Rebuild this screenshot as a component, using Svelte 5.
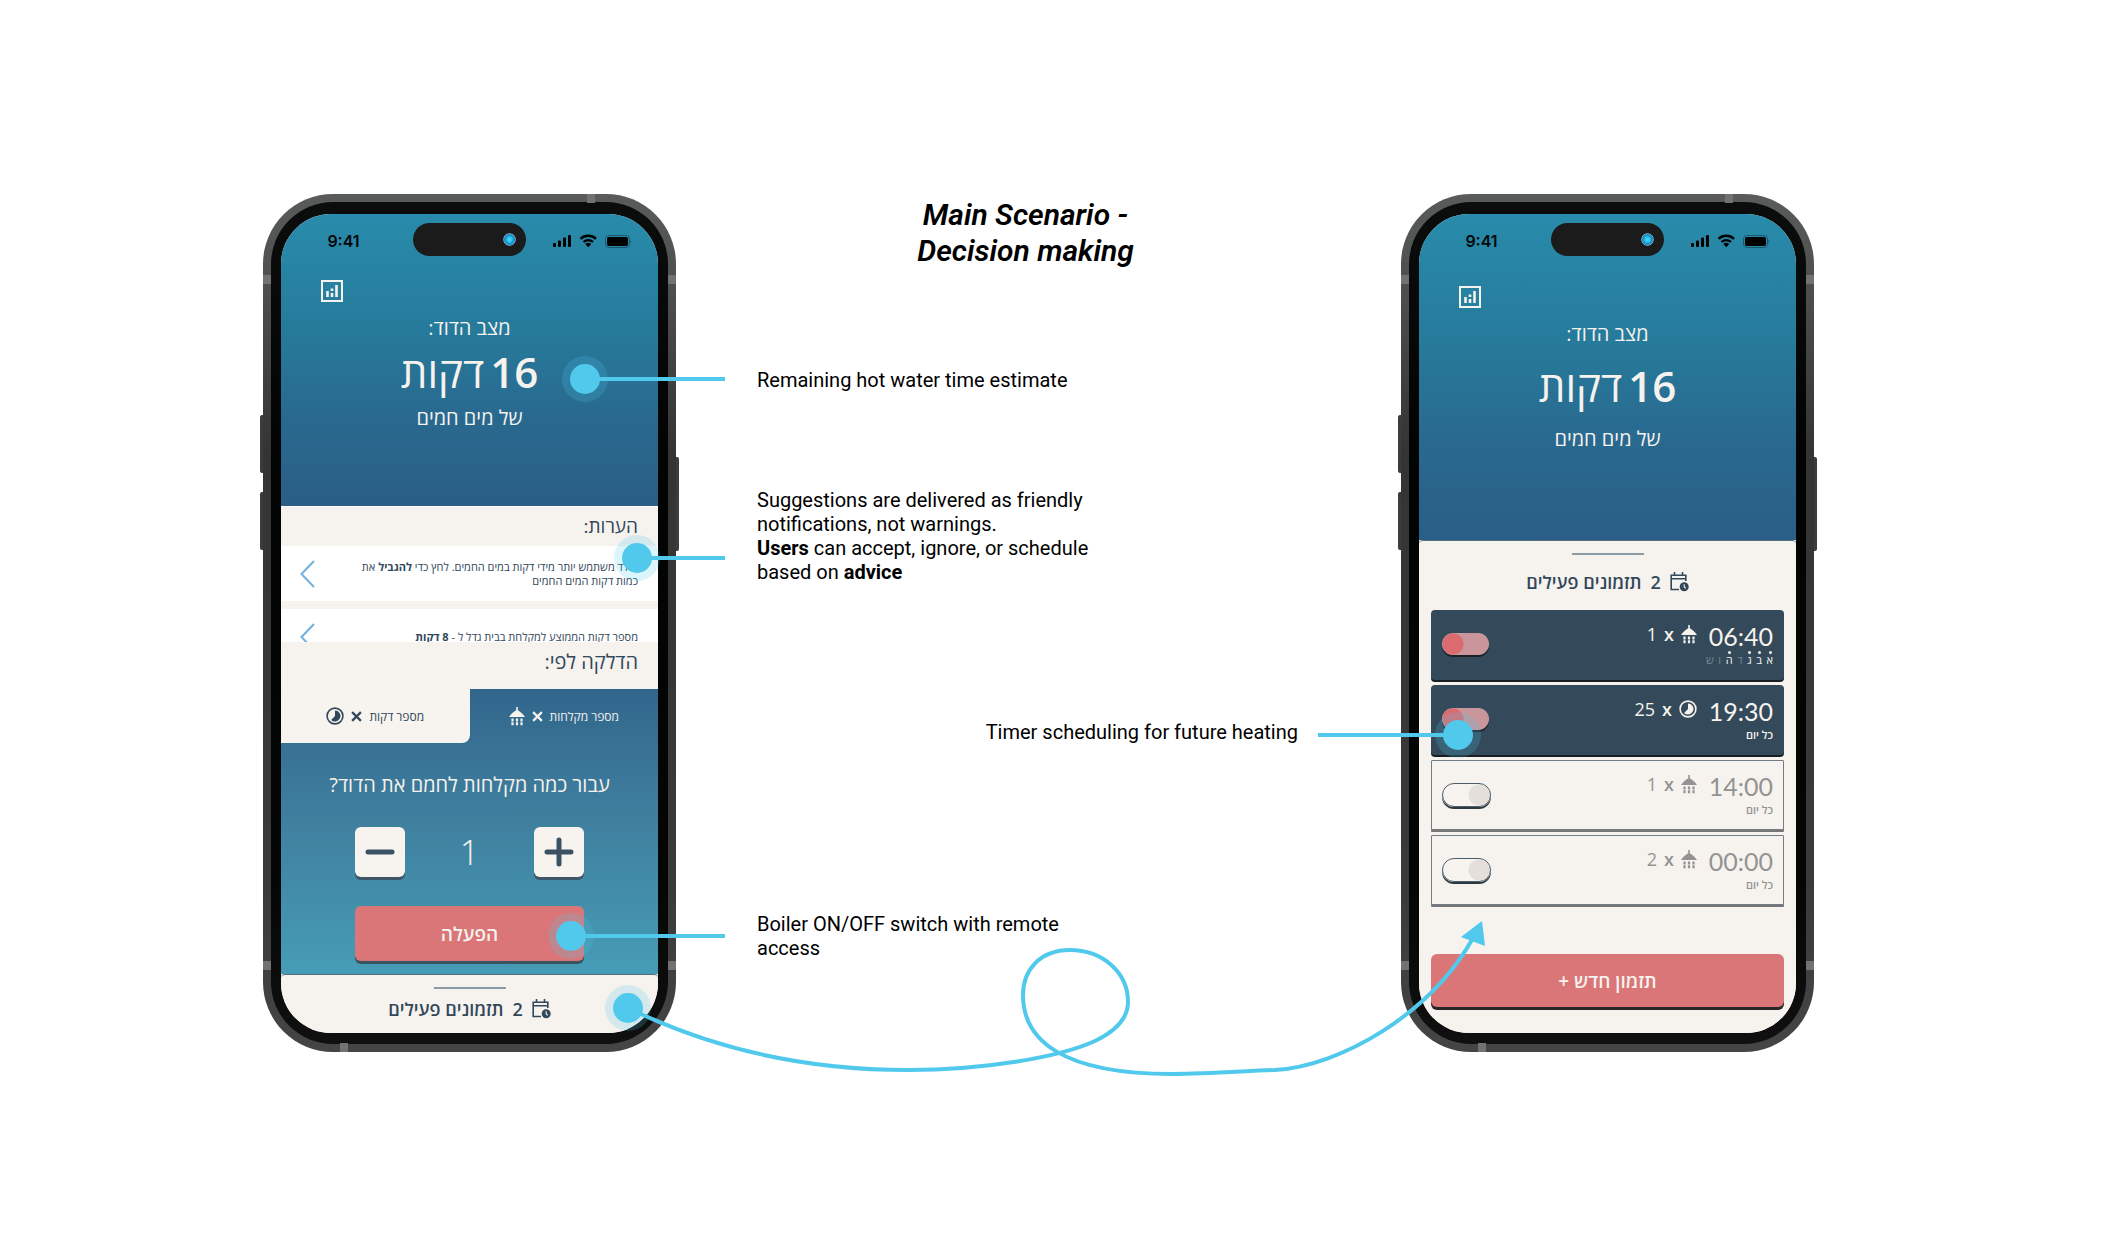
<script>
  let showers = $state(1);
  let mode = $state('showers');

  const week = [
    { letter: 'א', on: true },
    { letter: 'ב', on: true },
    { letter: 'ג', on: true },
    { letter: 'ד', on: false },
    { letter: 'ה', on: true },
    { letter: 'ו', on: false },
    { letter: 'ש', on: false }
  ];

  let timers = $state([
    { time: '06:40', kind: 'shower', amount: 1, days: true, on: true },
    { time: '19:30', kind: 'minutes', amount: 25, days: false, on: true },
    { time: '14:00', kind: 'shower', amount: 1, days: false, on: false },
    { time: '00:00', kind: 'shower', amount: 2, days: false, on: false }
  ]);
</script>

{#snippet showerIcon()}
  <svg class="shower" viewBox="0 0 16 19" aria-hidden="true">
    <path d="M7.200 0h1.600v3.200c2.600 1.400 5 3.600 7.200 6.800H0c2.200-3.200 4.600-5.400 7.200-6.800z" fill="currentColor" />
    <path d="M3.500 11.500v7M8 11.500v7M12.500 11.500v7" stroke="currentColor" stroke-width="2.200" stroke-dasharray="2.900 0.900" fill="none" />
  </svg>
{/snippet}

{#snippet minutesIcon()}
  <svg class="minutes" viewBox="0 0 18 18" aria-hidden="true">
    <circle cx="9" cy="9" r="7.900" fill="none" stroke="currentColor" stroke-width="1.600" />
    <path d="M9 3.500a5.500 5.500 0 1 1-3.900 9.400L9 9z" fill="currentColor" />
  </svg>
{/snippet}

{#snippet calendarIcon()}
  <svg class="calendar" viewBox="0 0 19 20" aria-hidden="true">
    <path d="M9 17.500H1.200V3.200h14.600V9M1.200 6.800h14.600M4.500 0v3.500M12.500 0v3.500" fill="none" stroke="currentColor" stroke-width="1.600" />
    <circle cx="14.200" cy="14.800" r="4.500" fill="currentColor" />
    <path d="M14.200 12.200v2.800l1.600 1.300" fill="none" stroke="#f6f2ee" stroke-width="1.100" />
  </svg>
{/snippet}

{#snippet chevron()}
  <svg class="chevron" viewBox="0 0 15 28" aria-hidden="true">
    <path d="M14 1L1.500 14 14 27" fill="none" stroke="currentColor" stroke-width="2" />
  </svg>
{/snippet}

{#snippet frameParts()}
  <i class="key key-up"></i>
  <i class="key key-down"></i>
  <i class="key key-power"></i>
  <i class="band band-top"></i>
  <i class="band band-left-high"></i>
  <i class="band band-right-high"></i>
  <i class="band band-left-low"></i>
  <i class="band band-right-low"></i>
  <i class="band band-bottom"></i>
{/snippet}

{#snippet hero()}
  <div class="status" dir="ltr">
    <span class="clock">9:41</span>
    <span class="island"><i class="camera"></i></span>
    <svg class="radios" viewBox="0 0 80 14" aria-hidden="true">
      <rect x="1" y="9" width="3" height="4" rx="1" />
      <rect x="6" y="6.500" width="3" height="6.500" rx="1" />
      <rect x="11" y="3.500" width="3" height="9.500" rx="1" />
      <rect x="16" y="1" width="3" height="12" rx="1" />
      <path d="M28.500 4.800a11.500 11.500 0 0 1 15.500 0" fill="none" stroke="#000" stroke-width="2.400" />
      <path d="M31.500 8a7 7 0 0 1 9.500 0" fill="none" stroke="#000" stroke-width="2.300" />
      <path d="M36.250 13.200l-3-3.100a4.400 4.400 0 0 1 6 0z" />
      <rect x="53.500" y="1.500" width="24" height="12" rx="3.500" fill="none" stroke="#000" stroke-opacity=".35" />
      <rect x="55" y="3" width="21" height="9" rx="2" />
      <path d="M78.500 6v3c1-.3 1-2.700 0-3z" fill-opacity=".4" />
    </svg>
  </div>
  <button class="stats" aria-label="סטטיסטיקה">
    <svg viewBox="0 0 22 22" aria-hidden="true">
      <rect x="1" y="1" width="20" height="20" fill="none" stroke="currentColor" stroke-width="2" />
      <path d="M6.500 11v6M11 8.500v2.500M11 13v4M15.500 5v12" stroke="currentColor" stroke-width="2.600" fill="none" />
    </svg>
  </button>
  <p class="caption">מצב הדוד:</p>
  <p class="reading"><b>16</b><span>דקות</span></p>
  <p class="caption">של מים חמים</p>
{/snippet}

<main>
  <div class="board">
    <section class="phone">
      {@render frameParts()}
      <div class="bezel">
        <div class="screen home" dir="rtl" lang="he">
          <header class="hero">{@render hero()}</header>

          <h2 class="notes-title">הערות:</h2>
          <div class="advice-list">
            <button class="advice">
              <span>הילד משתמש יותר מידי דקות במים החמים. לחץ כדי <b>להגביל</b> את<br />כמות דקות המים החמים</span>
              {@render chevron()}
            </button>
            <button class="advice">
              <span>מספר דקות הממוצע למקלחת בבית גדל ל - <b>8 דקות</b></span>
              {@render chevron()}
            </button>
          </div>
          <h2 class="mode-title">הדלקה לפי:</h2>

          <div class="heater">
            <div class="tabs">
              <button class:idle={mode !== 'showers'} onclick={() => (mode = 'showers')}>
                <span>מספר מקלחות</span>
                <svg class="times" viewBox="0 0 10 10" aria-hidden="true"><path d="M1 1l8 8M9 1L1 9" /></svg>
                {@render showerIcon()}
              </button>
              <button class:idle={mode !== 'minutes'} onclick={() => (mode = 'minutes')}>
                <span>מספר דקות</span>
                <svg class="times" viewBox="0 0 10 10" aria-hidden="true"><path d="M1 1l8 8M9 1L1 9" /></svg>
                {@render minutesIcon()}
              </button>
            </div>
            <p class="question">עבור כמה מקלחות לחמם את הדוד?</p>
            <div class="stepper">
              <button aria-label="הוסף" onclick={() => (showers += 1)}>
                <svg viewBox="0 0 30 30" aria-hidden="true"><path d="M15 3v24M3 15h24" /></svg>
              </button>
              <output>{showers}</output>
              <button aria-label="הפחת" onclick={() => (showers = Math.max(1, showers - 1))}>
                <svg viewBox="0 0 30 30" aria-hidden="true"><path d="M3 15h24" /></svg>
              </button>
            </div>
            <button class="primary activate">הפעלה</button>
          </div>

          <footer class="sheet">
            <i class="handle"></i>
            <h2 class="sheet-title">{@render calendarIcon()}<span>2</span><span>תזמונים פעילים</span></h2>
          </footer>
        </div>
      </div>
      <i class="spot reach-right spot-time"></i>
      <i class="spot reach-right spot-advice"></i>
      <i class="spot reach-right spot-activate"></i>
      <i class="spot spot-sheet"></i>
    </section>

    <section class="story">
      <h1>Main Scenario -<br />Decision making</h1>
      <p class="note note-time">Remaining hot water time estimate</p>
      <p class="note note-advice">
        Suggestions are delivered as friendly notifications, not warnings.<br />
        <b>Users</b> can accept, ignore, or schedule<br />
        based on <b>advice</b>
      </p>
      <p class="note note-timer">Timer scheduling for future heating</p>
      <p class="note note-switch">Boiler ON/OFF switch with remote access</p>
    </section>

    <section class="phone">
      {@render frameParts()}
      <div class="bezel">
        <div class="screen schedule" dir="rtl" lang="he">
          <header class="hero tall">{@render hero()}</header>
          <div class="sheet open">
            <i class="handle"></i>
            <h2 class="sheet-title">{@render calendarIcon()}<span>2</span><span>תזמונים פעילים</span></h2>
            <ul class="timers">
              {#each timers as timer}
                <li class="timer" class:off={!timer.on}>
                  <div class="when">
                    <time dir="ltr">{timer.time}</time>
                    {#if timer.days}
                      <span class="days">
                        {#each week as day}
                          <span class:skip={!day.on}>{day.letter}</span>
                        {/each}
                      </span>
                    {:else}
                      <span class="daily">כל יום</span>
                    {/if}
                  </div>
                  <div class="dose">
                    {#if timer.kind === 'shower'}{@render showerIcon()}{:else}{@render minutesIcon()}{/if}
                    <span class="by">x</span>
                    <span>{timer.amount}</span>
                  </div>
                  <input type="checkbox" role="switch" aria-label={timer.time} bind:checked={timer.on} />
                </li>
              {/each}
            </ul>
            <button class="primary create">תזמון חדש +</button>
          </div>
        </div>
      </div>
      <i class="spot reach-left spot-switch"></i>
    </section>

    <svg class="journey" viewBox="263 194 1551 858" preserveAspectRatio="none" aria-hidden="true">
      <path
        d="M641 1014C730 1055 820 1070 908 1070C985 1070 1060 1057 1095 1041C1118 1030 1128 1016 1128 1002C1128 972 1102 950 1070 950C1040 950 1023 970 1023 995C1023 1040 1062 1074 1172 1074C1210 1074 1245 1071 1275 1070C1340 1066 1430 1015 1473 938"
        fill="none" stroke="#50c9ec" stroke-width="4" />
      <path d="M1482 921L1461 937L1485 946z" fill="#50c9ec" />
    </svg>
  </div>
</main>

<style>
  :global(body) {
    margin: 0;
    background: #fff;
  }

  main {
    padding: 194px 28px 182px 0;
    font-family: Roboto, 'Liberation Sans', sans-serif;
    color: #000;
  }

  .board {
    position: relative;
    display: grid;
    grid-template-columns: 413px minmax(400px, 725px) 413px;
    justify-content: center;
    align-items: start;
    width: fit-content;
    margin: 0 auto;
  }

  h1, h2, p, ul {
    margin: 0;
    padding: 0;
  }

  button {
    border: 0;
    padding: 0;
    background: none;
    color: inherit;
    font: inherit;
    cursor: pointer;
  }

  .journey {
    position: absolute;
    inset: 0;
    width: 100%;
    height: 100%;
    overflow: visible;
    pointer-events: none;
  }

  /* Device frame */
  .phone {
    position: relative;
    box-sizing: border-box;
    padding: 8px;
    border-radius: 70px;
    background: linear-gradient(#5a5c5c, #4c4d4d 12%, #343434 30%, #3a3a3a 80%, #454545);
  }

  .bezel {
    padding: 12px 10px 11px;
    border-radius: 62px;
    background: linear-gradient(#0b0c0c, #020404 30%, #040505 80%, #101010);
  }

  .screen {
    display: flex;
    flex-direction: column;
    overflow: hidden;
    border-radius: 50px;
    background: #f6f2ee;
    color: #31475a;
    font-family: 'Open Sans', 'Liberation Sans', sans-serif;
  }

  .key {
    position: absolute;
    width: 3px;
    height: 58px;
    background: #3b3c3c;
  }

  .key-up {
    top: 221px;
    left: -3px;
    border-radius: 2px 0 0 2px;
  }

  .key-down {
    top: 298px;
    left: -3px;
    border-radius: 2px 0 0 2px;
  }

  .key-power {
    top: 263px;
    right: -3px;
    height: 94px;
    border-radius: 0 2px 2px 0;
  }

  .band {
    position: absolute;
    width: 8px;
    height: 9px;
    background: #727272;
  }

  .band-top { top: 0; left: 324px; }
  .band-left-high { top: 81px; left: 0; }
  .band-right-high { top: 81px; right: 0; }
  .band-left-low { bottom: 82px; left: 0; }
  .band-right-low { bottom: 82px; right: 0; }
  .band-bottom { bottom: 0; left: 77px; }

  /* Hero */
  .hero {
    box-sizing: border-box;
    display: flex;
    flex-direction: column;
    height: 292px;
    background: linear-gradient(#298bab, #267c9c 36%, #29698f 70%, #2a5e86);
    color: #f6f2ee;
    text-align: center;
  }

  .hero.tall {
    height: 326px;
  }

  .status {
    display: grid;
    grid-template-columns: 1fr 113px 1fr;
    align-items: center;
    padding-top: 9px;
    color: #04080a;
  }

  .clock {
    padding-top: 3px;
    padding-right: 7px;
    font: 600 16px/30px Inter, sans-serif;
  }

  .island {
    display: flex;
    align-items: center;
    justify-content: flex-end;
    height: 33px;
    padding-right: 10px;
    border-radius: 17px;
    background: #1b1b1b;
  }

  .camera {
    width: 11px;
    height: 11px;
    border: 1px solid #8fb3c4;
    outline: 1px solid #141c22;
    border-radius: 50%;
    background: radial-gradient(#3fd0f0 20%, #159cd8 50%, #1d5a88);
  }

  .radios {
    width: 80px;
    height: 14px;
    margin-top: 3px;
    margin-left: 26px;
  }

  .stats {
    align-self: flex-end;
    width: 22px;
    height: 22px;
    margin: 24px 0 0 40px;
  }

  .stats svg {
    display: block;
  }

  .caption {
    font-size: 20px;
    line-height: 26px;
  }

  .stats + .caption {
    margin-top: 13px;
  }

  .reading {
    display: flex;
    justify-content: center;
    gap: 6px;
    margin: 6px 0 8px;
    font-size: 42px;
    line-height: 50px;
  }

  .reading b {
    font-weight: 600;
  }

  .tall .stats {
    margin-top: 30px;
  }

  .tall .reading {
    margin: 14px 0 15px;
  }

  /* Advice */
  h2 {
    font-size: 19px;
    font-weight: 500;
    line-height: 24px;
  }

  .notes-title {
    padding: 7px 20px 8px;
    border-top: 1px solid #fff;
  }

  .mode-title {
    padding: 8px 20px 15px;
    font-size: 20px;
  }

  .advice-list {
    display: flex;
    flex-direction: column;
    gap: 8px;
    height: 96px;
    overflow: hidden;
  }

  .advice {
    flex: none;
    display: flex;
    align-items: center;
    justify-content: space-between;
    height: 55px;
    padding: 0 20px 0 19px;
    background: #fff;
    color: #31475a;
    font-size: 11px;
    font-weight: 500;
    line-height: 14px;
    text-align: right;
  }

  .advice span {
    width: 300px;
  }

  .chevron {
    width: 15px;
    height: 28px;
    color: #72b0dc;
  }

  /* Heater */
  .heater {
    display: flex;
    flex-direction: column;
    align-items: center;
    padding-bottom: 10px;
    background: linear-gradient(#31668c, #3f7f9e 45%, #469cb6);
    color: #f6f2ee;
  }

  .tabs {
    align-self: stretch;
    display: grid;
    grid-template-columns: 1fr 1fr;
  }

  .tabs button {
    display: flex;
    align-items: center;
    justify-content: center;
    gap: 7px;
    height: 54px;
    font-size: 12px;
  }

  .tabs .idle {
    border-radius: 0 0 8px 0;
    background: #f7f4ef;
    color: #31475a;
  }

  .times {
    width: 11px;
    height: 11px;
    fill: none;
    stroke: currentColor;
    stroke-width: 2;
  }

  .shower {
    width: 16px;
    height: 19px;
  }

  .minutes {
    width: 18px;
    height: 18px;
  }

  .question {
    margin-top: 29px;
    font-size: 20px;
    line-height: 26px;
  }

  .stepper {
    display: flex;
    align-items: center;
    justify-content: space-between;
    width: 229px;
    margin-top: 29px;
  }

  .stepper button {
    display: grid;
    place-items: center;
    width: 50px;
    height: 50px;
    border-radius: 6px;
    background: #f7f4ef;
    box-shadow: 0 3px #3d5566;
  }

  .stepper svg {
    width: 30px;
    height: 30px;
    fill: none;
    stroke: #3a5264;
    stroke-width: 5;
    stroke-linecap: round;
  }

  .stepper output {
    font-size: 34px;
    font-weight: 300;
    line-height: 50px;
  }

  .primary {
    border-radius: 6px;
    background: #da7678;
    color: #f6f2ee;
    font-size: 19px;
    font-weight: 600;
    line-height: 24px;
  }

  .activate {
    width: 229px;
    height: 55px;
    margin-top: 29px;
    margin-bottom: 3px;
    box-shadow: 0 3px #3a5360;
  }

  /* Timer sheet */
  .sheet {
    display: flex;
    flex-direction: column;
    align-items: center;
    padding: 12px;
    border-top: 1px solid #54707f;
    border-radius: 4px 4px 0 0;
    background: #f6f2ee;
  }

  .handle {
    width: 72px;
    height: 2px;
    background: #8c9ca6;
  }

  .sheet-title {
    display: flex;
    align-items: center;
    gap: 9px;
    margin-top: 8px;
    font-size: 18px;
    font-weight: 600;
  }

  .calendar {
    width: 19px;
    height: 20px;
  }

  .open .sheet-title {
    margin-top: 15px;
  }

  .timers {
    align-self: stretch;
    display: flex;
    flex-direction: column;
    gap: 5px;
    margin-top: 16px;
    list-style: none;
  }

  .timer {
    box-sizing: border-box;
    display: flex;
    align-items: flex-start;
    height: 70px;
    padding: 12px 11px 0;
    border-radius: 4px;
    background: #344a5a;
    box-shadow: 0 2px #1a1e22;
    color: #f6f2ee;
  }

  .timer.off {
    padding: 11px 10px 0;
    border: 1px solid #6f7f8a;
    border-radius: 1px;
    background: #f6f3ee;
    box-shadow: 0 2px #7a7675;
    color: #939394;
  }

  .when {
    display: flex;
    flex-direction: column;
    width: 67px;
  }

  .when time {
    font-family: Lato, sans-serif;
    font-size: 25px;
    line-height: 28px;
    text-align: right;
  }

  .daily,
  .days {
    font-size: 11px;
    font-weight: 600;
    line-height: 20px;
  }

  .days {
    display: flex;
    justify-content: space-between;
    font-weight: 400;
  }

  .days span {
    position: relative;
  }

  .days span:not(.skip)::before {
    content: '';
    position: absolute;
    top: 1px;
    left: 50%;
    width: 3px;
    height: 3px;
    margin-left: -1px;
    border-radius: 50%;
    background: currentColor;
  }

  .days .skip {
    color: #77858f;
  }

  .dose {
    display: flex;
    align-items: center;
    gap: 7px;
    margin-right: 9px;
    font-size: 18px;
    line-height: 24px;
  }

  .by {
    font-weight: 600;
  }

  .timer input {
    appearance: none;
    box-sizing: border-box;
    width: 47px;
    height: 22px;
    margin: 11px auto 0 0;
    border-radius: 11px;
    background: radial-gradient(circle at 11px 11px, #da6c70 10px, #c9979b 11px);
    box-shadow: 0 2px #1d2126;
  }

  .timer input:not(:checked) {
    width: 49px;
    height: 24px;
    border: 1px solid #4b5e6b;
    border-radius: 12px;
    background: radial-gradient(circle at 36px 11px, #e5dfdb 10px, #f7f4f0 11px);
    box-shadow: 0 2px #2c3941;
  }

  .create {
    align-self: stretch;
    height: 53px;
    margin-top: 49px;
    margin-bottom: 14px;
    box-shadow: 0 3px #262626;
  }

  /* Callouts */
  .spot {
    position: absolute;
    width: 30px;
    height: 30px;
    border-radius: 50%;
    background: #50c9ec;
    box-shadow: 0 0 0 8px rgb(80 201 236 / 20%);
  }

  .reach-right::after,
  .reach-left::after {
    content: '';
    position: absolute;
    top: 13px;
    height: 4px;
    background: #50c9ec;
  }

  .reach-right::after { left: 28px; }
  .reach-left::after { right: 28px; }

  .spot-time { top: 170px; left: 307px; }
  .spot-time::after { width: 127px; }
  .spot-advice { top: 349px; left: 359px; }
  .spot-advice::after { width: 75px; }
  .spot-activate { top: 727px; left: 293px; }
  .spot-activate::after { width: 141px; }
  .spot-sheet { top: 799px; left: 350px; }
  .spot-switch { top: 526px; left: 42px; }
  .spot-switch::after { width: 127px; }

  .story {
    display: flex;
    flex-direction: column;
    padding: 3px 103px 0 81px;
  }

  h1 {
    padding-right: 4px;
    font-size: 30px;
    font-style: italic;
    font-weight: 600;
    line-height: 36px;
    text-align: center;
  }

  .note {
    max-width: 340px;
    font-size: 20px;
    line-height: 24px;
  }

  .note-time { margin-top: 99px; }
  .note-advice { margin-top: 96px; }
  .note-timer { align-self: flex-end; margin-top: 136px; }
  .note-switch { margin-top: 168px; }
</style>
